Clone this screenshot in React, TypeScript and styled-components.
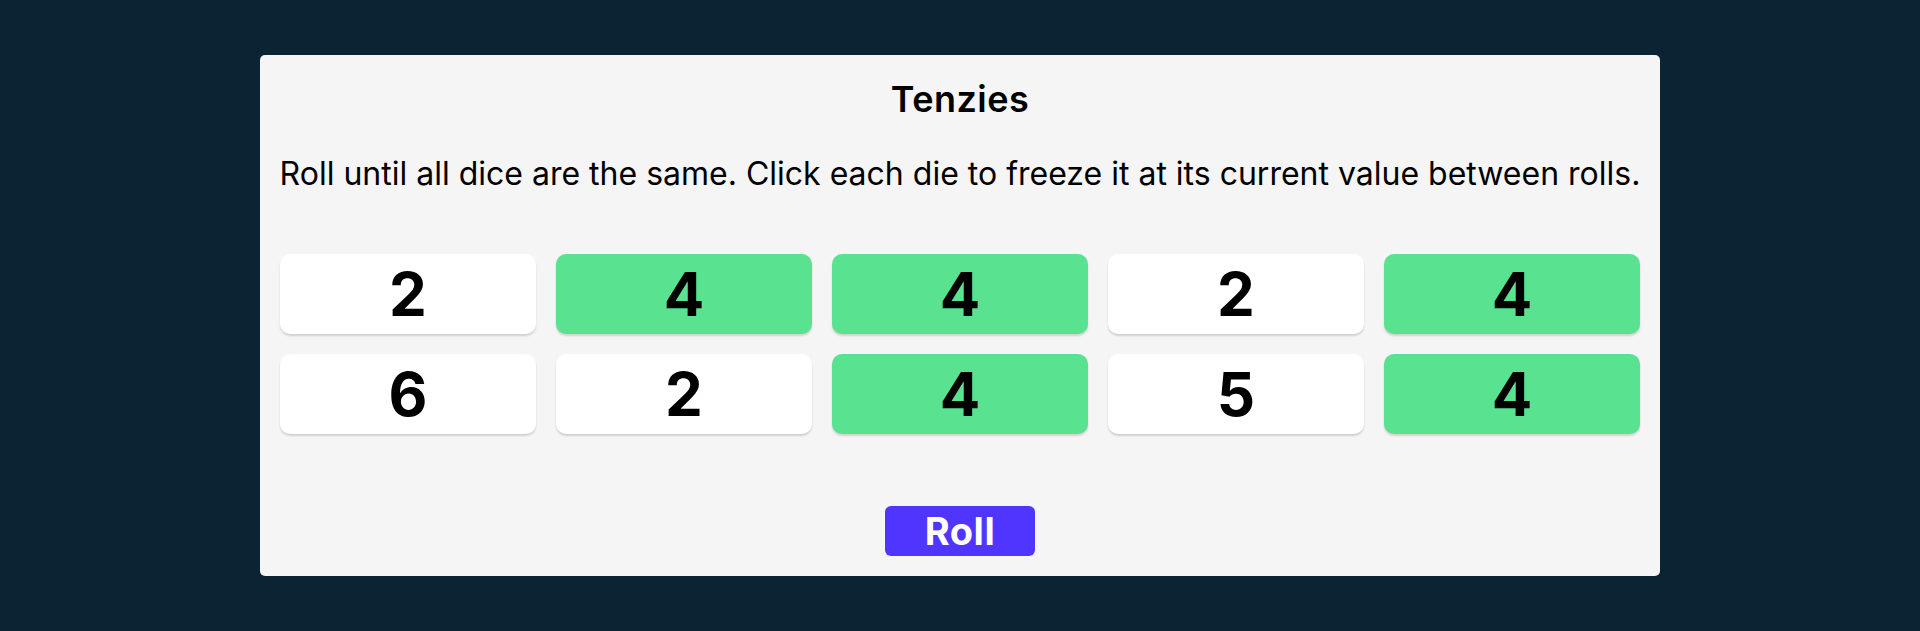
import styled, { createGlobalStyle } from 'styled-components'

const dice = [
  { value: 2, held: false },
  { value: 4, held: true },
  { value: 4, held: true },
  { value: 2, held: false },
  { value: 4, held: true },
  { value: 6, held: false },
  { value: 2, held: false },
  { value: 4, held: true },
  { value: 5, held: false },
  { value: 4, held: true },
]

const App = () => {
  return (
    <Page>
      <GlobalStyle />
      <Board>
        <Title>Tenzies</Title>
        <Instructions>
          Roll until all dice are the same. Click each die to freeze it at its current value between rolls.
        </Instructions>
        <DiceGrid>
          {dice.map((die, i) => (
            <Die key={i} $held={die.held}>{die.value}</Die>
          ))}
        </DiceGrid>
        <RollButton>Roll</RollButton>
      </Board>
    </Page>
  )
}

export default App

const GlobalStyle = createGlobalStyle`
  html, body {
    margin: 0;
    padding: 0;
    background: #0B2434;
  }
  * {
    box-sizing: border-box;
  }
`

const Page = styled.div`
  height: 631px;
  display: flex;
  justify-content: center;
  padding-top: 55px;
  font-family: Inter, 'Noto Sans', sans-serif;
`

const Board = styled.main`
  width: 1400px;
  height: 521px;
  background: #F5F5F5;
  border-radius: 5px;
  display: flex;
  flex-direction: column;
  align-items: center;
  padding: 20px;
`

const Title = styled.h1`
  margin: 0;
  margin-top: 4px;
  font-size: 36px;
  font-weight: 600;
  letter-spacing: 0.5px;
  line-height: 40px;
  color: #000;
`

const Instructions = styled.p`
  margin: 0;
  margin-top: 35px;
  font-size: 32px;
  line-height: 40px;
  text-align: center;
  color: #000;
  white-space: nowrap;
`

const DiceGrid = styled.div`
  margin-top: 60px;
  width: 100%;
  display: grid;
  grid-template-columns: repeat(5, 1fr);
  grid-auto-rows: 80px;
  gap: 20px;
`

const Die = styled.div<{ $held: boolean }>`
  display: flex;
  align-items: center;
  justify-content: center;
  background: ${(p) => (p.$held ? '#59E391' : '#FFFFFF')};
  border-radius: 10px;
  box-shadow: 0 2px 2px rgba(0, 0, 0, 0.15);
  font-family: Inter, 'Liberation Sans', sans-serif;
  font-weight: 700;
  font-size: 60px;
  color: #000;
  cursor: pointer;
`

const RollButton = styled.button`
  margin-top: auto;
  width: 150px;
  height: 50px;
  border: none;
  border-radius: 6px;
  background: #5035FF;
  color: #fff;
  font-family: Inter, 'Noto Sans', sans-serif;
  font-weight: 700;
  font-size: 38px;
  letter-spacing: 0.5px;
  cursor: pointer;
`
